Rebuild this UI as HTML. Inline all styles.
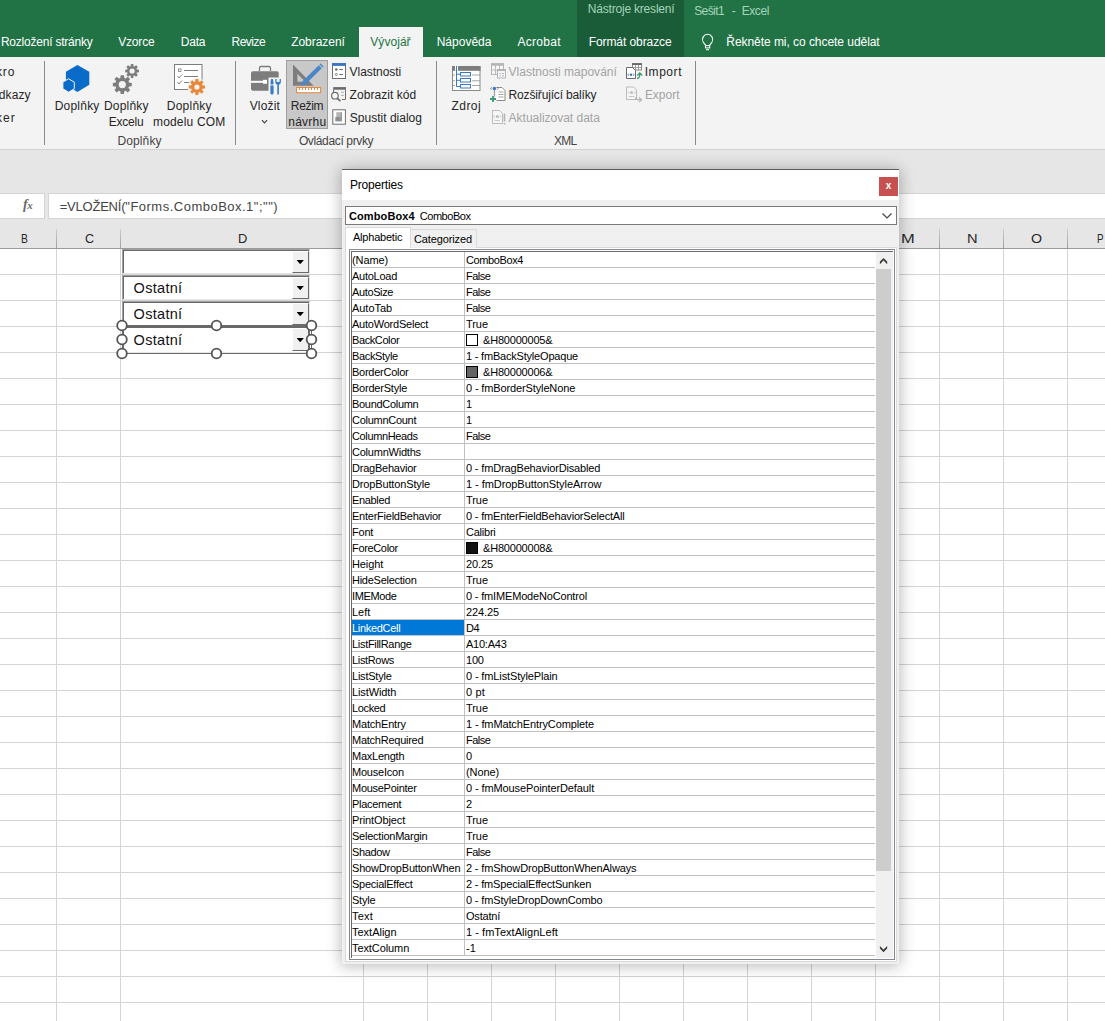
<!DOCTYPE html>
<html lang="cs"><head><meta charset="utf-8"><title>Excel</title>
<style>
*{box-sizing:border-box;margin:0;padding:0}
html,body{width:1105px;height:1021px;overflow:hidden;background:#fff}
body{font-family:"Liberation Sans",sans-serif;font-size:12px;color:#262626;position:relative}
.abs,.t{position:absolute;white-space:nowrap}
.t{line-height:14px}
#green{left:0;top:0;width:1105px;height:57px;background:#217346}
#ctx{left:577px;top:0;width:107px;height:57px;background:#1a5c38}
.L{position:absolute;line-height:16px;white-space:nowrap}
#devtab{left:359px;top:27px;width:64px;height:30px;background:#f3f3f3}
#ribbon{left:0;top:57px;width:1105px;height:93px;background:#f3f3f3;border-bottom:1px solid #d2d2d2}
#gap{left:0;top:150px;width:1105px;height:98px;background:#e6e6e6}
.sep{position:absolute;top:61px;width:1px;height:84px;background:#8a8a8a}
.rl{position:absolute;font-size:12px;line-height:16px;white-space:nowrap;color:#262626}
.rl.c{text-align:center;transform:translateX(-50%)}
.gl{position:absolute;top:133px;font-size:12px;line-height:16px;color:#444;white-space:nowrap;transform:translateX(-50%)}
.dis{color:#a6a6a6}
#fxbox{left:0;top:193px;width:45px;height:26px;background:#fff;border:1px solid #d4d4d4;border-left:0}
#fbar{left:48px;top:193px;width:1057px;height:26px;background:#fff;border:1px solid #d4d4d4;border-right:0}
#hdr{left:0;top:227px;width:1105px;height:22px;background:#e6e6e6;border-bottom:1px solid #9b9b9b}
.hs{position:absolute;top:229px;width:1px;height:19px;background:linear-gradient(#cfcfcf,#9e9e9e)}
.hl{position:absolute;top:231px;font-size:13px;line-height:16px;color:#262626;transform:translateX(-50%)}
#grid{left:0;top:249px;width:1105px;height:772px;background:#fff}
.cb{position:absolute;left:122px;width:188px;background:#fff;border:1px solid #a0a0a0;border-right-color:#e6e6e6;border-bottom-color:#e6e6e6;box-shadow:inset 1px 1px 0 #696969}
.cb .tx{position:absolute;left:10px;top:2px;font-size:15px;line-height:18px;color:#111;font-family:"Liberation Sans",sans-serif}
.cb .bt{position:absolute;right:0;top:1px;bottom:0;width:17px;background:#f0f0f0;border-left:1px solid #fff;border-top:1px solid #fff;border-right:1px solid #696969;border-bottom:1px solid #696969}
.cb .b4:after{top:9px!important}
.cb .bt:after{content:"";position:absolute;left:3.500px;top:8px;width:7.400px;height:4.200px;background:#000;clip-path:polygon(0 0,100% 0,50% 100%)}
.h{position:absolute;width:11px;height:11px;border-radius:50%;background:#fff;border:1.500px solid #5a5a5a}
/* dialog */
#dlg{left:342px;top:169px;width:557px;height:795px;background:#f0f0f0;box-shadow:0 1px 14px 1px rgba(0,0,0,.28);font-size:11px}
#dtop{left:0;top:0;width:557px;height:1px;background:#5a5a5a}
#dtitle{left:0;top:1px;width:557px;height:30px;background:#fff}
#dclose{left:537px;top:8px;width:19px;height:19px;background:#c75050;color:#fff;font-weight:bold;font-size:10px;line-height:17px;text-align:center}
#dcombo{left:3px;top:37px;width:552px;height:19px;background:#fff;border:1px solid #7a7a7a}
#tabpage{left:3px;top:78px;width:552px;height:715px;background:#fff;border:1px solid #dadada}
#tab1{left:3px;top:58px;width:66px;height:21px;background:#fff;border:1px solid #dadada;border-bottom:0}
#tab2{left:68px;top:60px;width:67px;height:19px;background:#f0f0f0;border:1px solid #dadada;border-bottom:0}
#list{left:7px;top:80px;width:546px;height:711px;background:#fff;border:1px solid #828790}
#list2{left:1px;top:1px;width:542px;height:707px;border-top:1px solid #696969;border-left:1px solid #696969;overflow:hidden}
.r{position:relative;height:16px;width:523px;border-bottom:1px solid #c0c0c0;font-size:11px;line-height:15px;color:#000;white-space:nowrap}
.r .n{position:absolute;left:0;top:0;width:112px;height:15px;padding-left:0;overflow:hidden;line-height:17px}
.r:after{content:"";position:absolute;left:112px;top:0;width:1px;height:15px;background:#c0c0c0}
.r .v{position:absolute;left:114px;top:0;height:15px;line-height:17px}
.r.sel .n{background:#0078d7;color:#fff}
.sw{position:absolute;left:0;top:2px;width:12px;height:12px;border:1px solid #000}
.cv{position:absolute;left:17px;top:0}
.tight{letter-spacing:-.3px}
#sb{left:524px;top:0;width:17px;height:706px;background:#f0f0f0}
#thumb{left:0;top:17px;width:15px;height:602px;background:#cdcdcd}
</style></head><body>
<div class="abs" id="green"></div>
<div class="abs" id="ctx"></div>
<div class="abs" id="devtab"></div>
<svg class="abs" style="left:699px;top:31px" width="16" height="20" viewBox="0 0 16 20"><path d="M6.600 14.400L4.180 10.950A5.100 5.100 0 1 1 13.020 10.950L10.600 14.400" fill="none" stroke="#fff" stroke-width="1.100"/><rect x="6.500" y="14.600" width="4.200" height="2.300" fill="none" stroke="#fff" stroke-width="1"/><path d="M7 18.700h3.200" stroke="#fff" stroke-width="1"/></svg>

<div class="abs" id="ribbon"></div>
<div class="abs" id="gap"></div>

<div class="sep" style="left:44px"></div><div class="sep" style="left:235px"></div><div class="sep" style="left:436px"></div><div class="sep" style="left:695px"></div>
<div class="abs" style="left:286px;top:60px;width:42px;height:69px;background:#c8c8c8;border:1px solid #9e9e9e"></div>
<svg class="abs" style="left:0;top:0" width="1105" height="150" viewBox="0 0 1105 150">
<!-- hex -->
<path d="M77.400 65L89.300 71.800V84.800L77.400 92L65.900 84.800V71.800Z" fill="#0a6cc8"/>
<path d="M68.600 78.800L74.300 82.100V88.800L68.600 92.200L62.900 88.800V82.100Z" fill="#0a6cc8" stroke="#f3f3f3" stroke-width="1"/>
<!-- gears -->
<path d="M129.01 82.59L131.76 82.95L131.76 86.25L129.01 86.61L128.46 87.92L130.15 90.12L127.82 92.45L125.62 90.76L124.31 91.31L123.95 94.06L120.65 94.06L120.29 91.31L118.98 90.76L116.78 92.45L114.45 90.12L116.14 87.92L115.59 86.61L112.84 86.25L112.84 82.95L115.59 82.59L116.14 81.28L114.45 79.08L116.78 76.75L118.98 78.44L120.29 77.89L120.65 75.14L123.95 75.14L124.31 77.89L125.62 78.44L127.82 76.75L130.15 79.08L128.46 81.28ZM125.90 84.60A3.6 3.6 0 1 0 118.70 84.60A3.6 3.6 0 1 0 125.90 84.60Z" fill="#7d7d7d" fill-rule="evenodd"/>
<path d="M136.89 69.57L139.00 69.80L139.00 72.20L136.89 72.43L136.50 73.37L137.83 75.03L136.13 76.73L134.47 75.40L133.53 75.79L133.30 77.90L130.90 77.90L130.67 75.79L129.73 75.40L128.07 76.73L126.37 75.03L127.70 73.37L127.31 72.43L125.20 72.20L125.20 69.80L127.31 69.57L127.70 68.63L126.37 66.97L128.07 65.27L129.73 66.60L130.67 66.21L130.90 64.10L133.30 64.10L133.53 66.21L134.47 66.60L136.13 65.27L137.83 66.97L136.50 68.63ZM134.70 71.00A2.6 2.6 0 1 0 129.50 71.00A2.6 2.6 0 1 0 134.70 71.00Z" fill="#7d7d7d" fill-rule="evenodd"/>
<!-- COM -->
<rect x="174.500" y="64.500" width="27.500" height="25" fill="#fff" stroke="#7d7d7d" stroke-width="1"/>
<rect x="178.500" y="69" width="2.500" height="2.500" fill="none" stroke="#7d7d7d" stroke-width=".8"/>
<path d="M184 70.500h14M184 76.500h14M184 82.500h6" stroke="#7d7d7d" stroke-width="1"/>
<path d="M177.500 76l1.500 2 3-3.500M177.500 82l1.500 2 3-3.500" fill="none" stroke="#7d7d7d" stroke-width=".9"/>
<circle cx="196.900" cy="87" r="9.300" fill="#f3f3f3"/>
<path d="M202.46 85.34L204.98 85.59L204.98 88.41L202.46 88.66L202.00 89.75L203.61 91.72L201.62 93.71L199.65 92.10L198.56 92.56L198.31 95.08L195.49 95.08L195.24 92.56L194.15 92.10L192.18 93.71L190.19 91.72L191.80 89.75L191.34 88.66L188.82 88.41L188.82 85.59L191.34 85.34L191.80 84.25L190.19 82.28L192.18 80.29L194.15 81.90L195.24 81.44L195.49 78.92L198.31 78.92L198.56 81.44L199.65 81.90L201.62 80.29L203.61 82.28L202.00 84.25ZM199.50 87.00A2.6 2.6 0 1 0 194.30 87.00A2.6 2.6 0 1 0 199.50 87.00Z" fill="#e8883a" fill-rule="evenodd"/>
<!-- briefcase -->
<path d="M259.500 71v-3.200a1.300 1.300 0 0 1 1.300-1.300h8.400a1.300 1.300 0 0 1 1.300 1.300V71" fill="none" stroke="#7d7d7d" stroke-width="1.300"/>
<rect x="251" y="71.300" width="27.700" height="19.500" rx="2" fill="#7d7d7d"/>
<rect x="251" y="80.800" width="16" height="2" fill="#fff"/>
<rect x="263" y="79.800" width="4" height="4" fill="#fff"/>
<rect x="268.500" y="77.500" width="14" height="18.500" fill="#f3f3f3"/>
<path d="M271.200 79h1.600l.6 2.500v3h-2.800v-3zM270.400 85.500h3.200v7.500a1.600 1.600 0 0 1-3.200 0z" fill="#3a7cc4"/>
<path d="M275.300 79v3a2.900 2.900 0 0 0 2 2.700V94.600h1.600V84.700a2.900 2.900 0 0 0 2-2.700v-3h-1.300v3h-3v-3z" fill="#3a7cc4"/>
<path d="M261.900 120.200l2.600 2.600 2.600-2.600" fill="none" stroke="#444" stroke-width="1.200"/>
<!-- design mode -->
<path d="M293 64.500V85.700H313.600ZM297.400 73.700L305.300 81.800H297.400Z" fill="#7d7d7d" fill-rule="evenodd"/>
<path d="M301 85.700l1.300-4.300 16.500-16.200 3 3L305.300 84.400z" fill="#4a86c8"/>
<path d="M319.500 64.600l1.100-1.100 3 3-1.100 1.100z" fill="#4a86c8"/>
<rect x="296.600" y="87.500" width="24" height="5.200" fill="#fff" stroke="#e8883a" stroke-width="1"/>
<path d="M299.500 88v2M302.500 88v2M305.500 88v2M308.500 88v2M311.500 88v2M314.500 88v2M317.500 88v2" stroke="#e8883a" stroke-width="1"/>
<!-- Vlastnosti -->
<rect x="332.500" y="63.500" width="13" height="15" fill="#fff" stroke="#6e6e6e"/>
<rect x="332" y="63" width="14" height="2.900" fill="#3b78c3"/>
<circle cx="336.300" cy="69.500" r="1.300" fill="#6a6a6a"/><circle cx="336.300" cy="74.500" r="1" fill="#fff" stroke="#6a6a6a" stroke-width=".8"/>
<path d="M339.300 69.500h3.600M339.300 74.500h3.600" stroke="#6a6a6a" stroke-width="1"/>
<!-- Zobrazit kod -->
<path d="M333.500 89.500v3M345.500 89.500v10h-3.500" fill="none" stroke="#6e6e6e"/>
<rect x="333.200" y="87.100" width="12.800" height="2.600" fill="#6a6a6a"/>
<path d="M341 92.300h2.800M341 95.400h2.800" stroke="#a6a6a6" stroke-width=".9"/>
<circle cx="334.900" cy="95.700" r="3.300" fill="#f6f6f6" stroke="#6e6e6e" stroke-width="1.200"/>
<path d="M337.400 98.300l3 2.900" stroke="#6e6e6e" stroke-width="1.800"/>
<!-- Spustit dialog -->
<rect x="332.800" y="109.800" width="12.600" height="14.400" fill="#fff" stroke="#6e6e6e"/>
<rect x="336.300" y="112.200" width="4.400" height="4.800" fill="#b4b4b4"/><rect x="335.300" y="117" width="5.400" height="4.400" fill="#8e8e8e"/>
<rect x="340.700" y="112.200" width="1" height="9.200" fill="#6a6a6a"/>
<!-- Zdroj -->
<rect x="452.500" y="66.500" width="27.500" height="24" fill="#fff" stroke="#8a8a8a"/>
<rect x="452" y="66" width="28.500" height="4.800" fill="#7d7d7d"/>
<rect x="455" y="66" width="3" height="4.800" fill="#fff"/>
<path d="M472 75h8M472 80.800h8M472 85.500h8M453 75h2M453 80.800h2M453 85.500h2" stroke="#9a9a9a" stroke-width=".9"/>
<path d="M456.500 66v20.500h4M456.500 74.200h4M456.500 80.300h4" fill="none" stroke="#3b78c3" stroke-width="1"/>
<rect x="460.500" y="72.500" width="10" height="3.500" fill="#fff" stroke="#3b78c3"/><rect x="460.500" y="78.500" width="10" height="3.500" fill="#fff" stroke="#3b78c3"/><rect x="460.500" y="84.500" width="10" height="3.500" fill="#fff" stroke="#3b78c3"/>
<!-- Vlastnosti mapovani (disabled) -->
<rect x="491.500" y="64" width="12" height="10.500" fill="#f6f6f6" stroke="#b4b4b4"/><rect x="491" y="63.200" width="13" height="2.500" fill="#b4b4b4"/>
<path d="M495.500 65v9.500M499.500 65v4M491.500 70h6" stroke="#b4b4b4" stroke-width=".9"/>
<rect x="497.500" y="69.500" width="8" height="8.500" fill="#f6f6f6" stroke="#b4b4b4"/><rect x="497" y="69" width="9" height="2" fill="#b4b4b4"/>
<path d="M499.500 73.500h1.500M502 73.500h2M499.500 75.800h1.500M502 75.800h2" stroke="#b4b4b4" stroke-width="1"/>
<!-- Rozsirujici -->
<path d="M496.500 87.500h5.500l3 3v10h-8.500" fill="#fff" stroke="#7d7d7d" stroke-width=".9"/>
<path d="M498.500 92h5M498.500 94.500h5M498.500 97h5" stroke="#8a8a8a" stroke-width=".8"/>
<path d="M494.400 89.500v7" stroke="#7d7d7d" stroke-width=".8"/>
<circle cx="494.400" cy="88.500" r="1.700" fill="#3b78c3"/>
<path d="M491.800 87.300l-1.200 1.200 1.200 1.200M497 87.300l1.200 1.200-1.200 1.200" fill="none" stroke="#555" stroke-width=".7"/>
<path d="M490 99h6M493 96v6" stroke="#3a9a78" stroke-width="1.800"/>
<!-- Aktualizovat (disabled) -->
<path d="M492.500 110.500h7l3 3v10h-10z" fill="#f6f6f6" stroke="#b4b4b4" stroke-width=".9"/>
<circle cx="497.300" cy="116.500" r="1.500" fill="#bdbdbd"/>
<path d="M494.500 115.300l-1 1.200 1 1.200M500 115.300l1 1.200-1 1.200M494.500 120.500h5.500" fill="none" stroke="#b4b4b4" stroke-width=".7"/>
<path d="M504.500 113.500v8M504.500 123v1.600" stroke="#b4b4b4" stroke-width="1.600"/>
<!-- Import -->
<rect x="632.500" y="63.700" width="9" height="6.300" fill="#fff" stroke="#7d7d7d" stroke-width=".9"/><rect x="632" y="63.200" width="10" height="1.800" fill="#6a6a6a"/>
<path d="M635.500 65v5M638.500 65v5M632.500 67.500h9" stroke="#7d7d7d" stroke-width=".7"/>
<path d="M626.500 67.500h6l3 3v8h-9z" fill="#fff" stroke="#6a6a6a" stroke-width="1"/>
<circle cx="631" cy="74.800" r="1.300" fill="#3b78c3"/>
<path d="M628.800 73.600l-1 1.200 1 1.200M633.200 73.600l1 1.200-1 1.200" fill="none" stroke="#555" stroke-width=".7"/>
<path d="M637 78.500c2.500 0 2.800-1.500 2.800-4.500M637.300 75.500l2.500-2.500 2.500 2.500" fill="none" stroke="#3a9a78" stroke-width="1.300"/>
<!-- Export (disabled) -->
<path d="M626.500 87h7l3 3v9.500h-10z" fill="#f6f6f6" stroke="#b4b4b4" stroke-width=".9"/>
<circle cx="631.500" cy="92.600" r="1.500" fill="#bdbdbd"/>
<path d="M629 91.400l-1 1.200 1 1.200M634 91.400l1 1.200-1 1.200M629 96.500h5.500" fill="none" stroke="#b4b4b4" stroke-width=".7"/>
<path d="M635.500 97.500c0 2 1 2.300 5.500 2.300M639 97.500l2.500 2.300-2.500 2.300" fill="none" stroke="#b4b4b4" stroke-width="1.200"/>
</svg>


<div class="abs" id="fxbox"></div>
<div class="abs" id="fbar"></div>
<div class="t" style="left:23px;top:196px;font-family:'Liberation Serif',serif;font-style:italic;font-weight:bold;font-size:14px;line-height:18px;color:#6a6a6a">f<span style="font-size:11px;margin-left:-.500px">x</span></div>

<div class="abs" id="hdr"></div>
<div class="abs" id="grid">
<svg width="1105" height="772" style="position:absolute;left:0;top:0"><defs>
<pattern id="hp" width="1105" height="26" patternUnits="userSpaceOnUse"><rect x="0" y="25" width="1105" height="1" fill="#d4d4d4"/></pattern></defs>
<rect width="1105" height="772" fill="url(#hp)"/>
<g fill="#d4d4d4"><rect x="56" width="1" height="772"/><rect x="120" width="1" height="772"/><rect x="363" width="1" height="772"/><rect x="427" width="1" height="772"/><rect x="491" width="1" height="772"/><rect x="555" width="1" height="772"/><rect x="619" width="1" height="772"/><rect x="683" width="1" height="772"/><rect x="747" width="1" height="772"/><rect x="811" width="1" height="772"/><rect x="875" width="1" height="772"/><rect x="939" width="1" height="772"/><rect x="1003" width="1" height="772"/><rect x="1067" width="1" height="772"/></g></svg>
</div>
<div class="hs" style="left:56px"></div><div class="hs" style="left:120px"></div><div class="hs" style="left:363px"></div><div class="hs" style="left:875px"></div><div class="hs" style="left:939px"></div><div class="hs" style="left:1003px"></div><div class="hs" style="left:1067px"></div>

<div class="cb" style="top:249px;height:25px"><div class="bt"></div></div>
<div class="cb" style="top:275px;height:25px"><div class="bt"></div></div>
<div class="cb" style="top:301px;height:25px"><div class="bt"></div></div>
<div class="cb" style="top:326px;height:27px;border-top-color:#696969;border-right-color:#6a6a6a"><div class="bt b4" style="bottom:1px"></div></div>
<div class="abs" style="left:122px;top:325px;width:190px;height:29px;border:1px solid #6a6a6a"></div>
<svg class="abs" style="left:110px;top:315px" width="212" height="50" viewBox="110 315 212 50"><g fill="#fff" stroke="#555" stroke-width="1.800"><circle cx="122" cy="325.500" r="4.800"/><circle cx="216.500" cy="325.500" r="4.800"/><circle cx="311.500" cy="325.500" r="4.800"/><circle cx="122" cy="339.500" r="4.800"/><circle cx="311.500" cy="339.500" r="4.800"/><circle cx="122" cy="353.500" r="4.800"/><circle cx="216.500" cy="353.500" r="4.800"/><circle cx="311.500" cy="353.500" r="4.800"/></g></svg>
<div class="L" style="left:0.9px;top:34.4px;font-size:12px;color:#fff;letter-spacing:-0.22px">Rozložení stránky</div>
<div class="L" style="left:118.2px;top:34.4px;font-size:12px;color:#fff;letter-spacing:-0.17px">Vzorce</div>
<div class="L" style="left:180.7px;top:34.4px;font-size:12px;color:#fff;letter-spacing:-0.18px">Data</div>
<div class="L" style="left:231.5px;top:34.4px;font-size:12px;color:#fff;letter-spacing:-0.50px">Revize</div>
<div class="L" style="left:291.2px;top:34.4px;font-size:12px;color:#fff;letter-spacing:-0.04px">Zobrazení</div>
<div class="L" style="left:370.3px;top:34.4px;font-size:12px;color:#217346;letter-spacing:0.05px">Vývojář</div>
<div class="L" style="left:436.7px;top:34.4px;font-size:12px;color:#fff;letter-spacing:-0.00px">Nápověda</div>
<div class="L" style="left:517.5px;top:34.4px;font-size:12px;color:#fff;letter-spacing:0.27px">Acrobat</div>
<div class="L" style="left:588.7px;top:34.4px;font-size:12px;color:#fff;letter-spacing:-0.08px">Formát obrazce</div>
<div class="L" style="left:726.3px;top:34.4px;font-size:12px;color:#fff;letter-spacing:-0.05px">Řekněte mi, co chcete udělat</div>
<div class="L" style="left:587.8px;top:1.0px;font-size:12px;color:#a5d3b8;letter-spacing:-0.20px">Nástroje kreslení</div>
<div class="L" style="left:694.2px;top:2.8px;font-size:12px;color:#a5d3b8;letter-spacing:-0.59px">Sešit1</div>
<div class="L" style="left:731.8px;top:2.8px;font-size:12px;color:#a5d3b8">-</div>
<div class="L" style="left:741.7px;top:2.8px;font-size:12px;color:#a5d3b8;letter-spacing:-0.41px">Excel</div>
<div class="L" style="left:-4.0px;top:64.3px;font-size:12px;color:#262626;letter-spacing:0.87px">kro</div>
<div class="L" style="left:-1.3px;top:86.8px;font-size:12px;color:#262626;letter-spacing:0.14px">dkazy</div>
<div class="L" style="left:-4.0px;top:109.8px;font-size:12px;color:#262626;letter-spacing:1.02px">ker</div>
<div class="L" style="left:54.7px;top:98.4px;font-size:12px;color:#262626;letter-spacing:0.22px">Doplňky</div>
<div class="L" style="left:103.9px;top:98.4px;font-size:12px;color:#262626;letter-spacing:0.22px">Doplňky</div>
<div class="L" style="left:108.8px;top:114.4px;font-size:12px;color:#262626;letter-spacing:-0.24px">Excelu</div>
<div class="L" style="left:166.8px;top:98.4px;font-size:12px;color:#262626;letter-spacing:0.24px">Doplňky</div>
<div class="L" style="left:153.0px;top:114.4px;font-size:12px;color:#262626;letter-spacing:0.17px">modelu COM</div>
<div class="L" style="left:117.5px;top:133.4px;font-size:12px;color:#444;letter-spacing:0.11px">Doplňky</div>
<div class="L" style="left:249.7px;top:98.4px;font-size:12px;color:#262626;letter-spacing:0.17px">Vložit</div>
<div class="L" style="left:290.8px;top:98.4px;font-size:12px;color:#262626;letter-spacing:-0.30px">Režim</div>
<div class="L" style="left:288.3px;top:114.2px;font-size:12px;color:#262626;letter-spacing:0.22px">návrhu</div>
<div class="L" style="left:349.6px;top:64.4px;font-size:12px;color:#262626;letter-spacing:-0.05px">Vlastnosti</div>
<div class="L" style="left:349.6px;top:86.8px;font-size:12px;color:#262626;letter-spacing:0.04px">Zobrazit kód</div>
<div class="L" style="left:349.8px;top:109.8px;font-size:12px;color:#262626;letter-spacing:0.01px">Spustit dialog</div>
<div class="L" style="left:298.9px;top:133.4px;font-size:12px;color:#444;letter-spacing:-0.36px">Ovládací prvky</div>
<div class="L" style="left:451.6px;top:98.4px;font-size:12px;color:#262626;letter-spacing:0.42px">Zdroj</div>
<div class="L" style="left:508.6px;top:64.4px;font-size:12px;color:#a3a3a3;letter-spacing:0.01px">Vlastnosti mapování</div>
<div class="L" style="left:508.6px;top:86.8px;font-size:12px;color:#262626;letter-spacing:-0.16px">Rozšiřující balíky</div>
<div class="L" style="left:508.6px;top:109.8px;font-size:12px;color:#a3a3a3;letter-spacing:-0.01px">Aktualizovat data</div>
<div class="L" style="left:644.7px;top:64.4px;font-size:12px;color:#262626;letter-spacing:0.56px">Import</div>
<div class="L" style="left:644.9px;top:86.8px;font-size:12px;color:#a3a3a3;letter-spacing:-0.02px">Export</div>
<div class="L" style="left:554.1px;top:133.4px;font-size:12px;color:#444;letter-spacing:-0.80px">XML</div>
<div class="L" style="left:59.7px;top:198.5px;font-size:13px;color:#444;letter-spacing:-0.22px">=VLOŽENÍ(</div>
<div class="L" style="left:125.3px;top:198.5px;font-size:13px;color:#444;letter-spacing:0.49px">"Forms.ComboBox.1";"")</div>
<div class="L" style="left:133.6px;top:279.8px;font-size:14.5px;color:#111;letter-spacing:0.29px">Ostatní</div>
<div class="L" style="left:133.6px;top:305.9px;font-size:14.5px;color:#111;letter-spacing:0.29px">Ostatní</div>
<div class="L" style="left:133.6px;top:332.1px;font-size:14.5px;color:#111;letter-spacing:0.29px">Ostatní</div>
<div class="L" style="left:21.0px;top:230.6px;font-size:12px;color:#262626;transform:scaleX(0.857);transform-origin:0 0">B</div>
<div class="L" style="left:84.6px;top:230.6px;font-size:12px;color:#262626;transform:scaleX(1.047);transform-origin:0 0">C</div>
<div class="L" style="left:237.9px;top:230.6px;font-size:12px;color:#262626;transform:scaleX(1.073);transform-origin:0 0">D</div>
<div class="L" style="left:901.2px;top:230.6px;font-size:12px;color:#262626;transform:scaleX(1.373);transform-origin:0 0">M</div>
<div class="L" style="left:966.9px;top:230.6px;font-size:12px;color:#262626;transform:scaleX(1.221);transform-origin:0 0">N</div>
<div class="L" style="left:1030.7px;top:230.6px;font-size:12px;color:#262626;transform:scaleX(1.183);transform-origin:0 0">O</div>
<div class="L" style="left:1096.5px;top:230.6px;font-size:12px;color:#262626;transform:scaleX(0.814);transform-origin:0 0">P</div>
<div class="abs" id="dlg">
 <div class="abs" id="dtop"></div>
 <div class="abs" id="dtitle"></div>
 <div class="t" style="left:8px;top:9px;font-size:12px;line-height:14px;color:#000;letter-spacing:-.2px">Properties</div>
 <div class="abs" id="dclose">x</div>
 <div class="abs" id="dcombo"></div>
 <div class="t" style="left:7px;top:40px;font-size:11px;line-height:14px;color:#000"><b style="letter-spacing:.1px">ComboBox4</b> <span style="margin-left:2px;letter-spacing:-.45px">ComboBox</span></div>
 <svg class="abs" style="left:539px;top:43px" width="12" height="8" viewBox="0 0 12 8"><path d="M1.500 1.500L6 6l4.500-4.500" fill="none" stroke="#444" stroke-width="1.200"/></svg>
 <div class="abs" id="tabpage"></div>
 <div class="abs" id="tab2"></div>
 <div class="abs" id="tab1"></div>
 <div class="t" style="left:11px;top:61px;letter-spacing:-.22px;color:#000">Alphabetic</div>
 <div class="t" style="left:72px;top:63px;letter-spacing:-.12px;color:#000">Categorized</div>
 <div class="abs" id="list"><div class="abs" id="list2">
<div class="r"><span class="n" style="letter-spacing:-0.10px">(Name)</span><span class="v" style="letter-spacing:-0.39px">ComboBox4</span></div>
<div class="r"><span class="n" style="letter-spacing:-0.26px">AutoLoad</span><span class="v" style="letter-spacing:-0.50px">False</span></div>
<div class="r"><span class="n" style="letter-spacing:-0.37px">AutoSize</span><span class="v" style="letter-spacing:-0.50px">False</span></div>
<div class="r"><span class="n" style="letter-spacing:-0.04px">AutoTab</span><span class="v" style="letter-spacing:-0.50px">False</span></div>
<div class="r"><span class="n" style="letter-spacing:-0.22px">AutoWordSelect</span><span class="v" style="letter-spacing:-0.05px">True</span></div>
<div class="r"><span class="n" style="letter-spacing:-0.40px">BackColor</span><span class="v"><i class="sw" style="background:#fff"></i><span class="cv" style="letter-spacing:-0.20px">&H80000005&</span></span></div>
<div class="r"><span class="n" style="letter-spacing:-0.35px">BackStyle</span><span class="v" style="letter-spacing:-0.20px">1 - fmBackStyleOpaque</span></div>
<div class="r"><span class="n" style="letter-spacing:-0.26px">BorderColor</span><span class="v"><i class="sw" style="background:#646464"></i><span class="cv" style="letter-spacing:-0.20px">&H80000006&</span></span></div>
<div class="r"><span class="n" style="letter-spacing:-0.22px">BorderStyle</span><span class="v" style="letter-spacing:-0.13px">0 - fmBorderStyleNone</span></div>
<div class="r"><span class="n" style="letter-spacing:-0.30px">BoundColumn</span><span class="v">1</span></div>
<div class="r"><span class="n" style="letter-spacing:-0.28px">ColumnCount</span><span class="v">1</span></div>
<div class="r"><span class="n" style="letter-spacing:-0.37px">ColumnHeads</span><span class="v" style="letter-spacing:-0.50px">False</span></div>
<div class="r"><span class="n" style="letter-spacing:-0.22px">ColumnWidths</span><span class="v"></span></div>
<div class="r"><span class="n" style="letter-spacing:-0.23px">DragBehavior</span><span class="v" style="letter-spacing:-0.15px">0 - fmDragBehaviorDisabled</span></div>
<div class="r"><span class="n" style="letter-spacing:-0.14px">DropButtonStyle</span><span class="v" style="letter-spacing:-0.06px">1 - fmDropButtonStyleArrow</span></div>
<div class="r"><span class="n" style="letter-spacing:-0.34px">Enabled</span><span class="v" style="letter-spacing:-0.05px">True</span></div>
<div class="r"><span class="n" style="letter-spacing:-0.24px">EnterFieldBehavior</span><span class="v" style="letter-spacing:-0.18px">0 - fmEnterFieldBehaviorSelectAll</span></div>
<div class="r"><span class="n" style="letter-spacing:-0.20px">Font</span><span class="v" style="letter-spacing:-0.23px">Calibri</span></div>
<div class="r"><span class="n" style="letter-spacing:-0.34px">ForeColor</span><span class="v"><i class="sw" style="background:#111"></i><span class="cv" style="letter-spacing:-0.20px">&H80000008&</span></span></div>
<div class="r"><span class="n" style="letter-spacing:-0.10px">Height</span><span class="v" style="letter-spacing:-0.11px">20.25</span></div>
<div class="r"><span class="n" style="letter-spacing:-0.26px">HideSelection</span><span class="v" style="letter-spacing:-0.05px">True</span></div>
<div class="r"><span class="n" style="letter-spacing:-0.38px">IMEMode</span><span class="v" style="letter-spacing:-0.17px">0 - fmIMEModeNoControl</span></div>
<div class="r"><span class="n" style="letter-spacing:-0.05px">Left</span><span class="v" style="letter-spacing:-0.13px">224.25</span></div>
<div class="r sel"><span class="n" style="letter-spacing:-0.31px">LinkedCell</span><span class="v" style="letter-spacing:-0.39px">D4</span></div>
<div class="r"><span class="n" style="letter-spacing:-0.31px">ListFillRange</span><span class="v" style="letter-spacing:-0.24px">A10:A43</span></div>
<div class="r"><span class="n" style="letter-spacing:-0.34px">ListRows</span><span class="v" style="letter-spacing:-0.20px">100</span></div>
<div class="r"><span class="n" style="letter-spacing:-0.22px">ListStyle</span><span class="v" style="letter-spacing:-0.13px">0 - fmListStylePlain</span></div>
<div class="r"><span class="n" style="letter-spacing:-0.11px">ListWidth</span><span class="v" style="letter-spacing:0.14px">0 pt</span></div>
<div class="r"><span class="n" style="letter-spacing:-0.35px">Locked</span><span class="v" style="letter-spacing:-0.05px">True</span></div>
<div class="r"><span class="n" style="letter-spacing:-0.19px">MatchEntry</span><span class="v" style="letter-spacing:-0.12px">1 - fmMatchEntryComplete</span></div>
<div class="r"><span class="n" style="letter-spacing:-0.25px">MatchRequired</span><span class="v" style="letter-spacing:-0.50px">False</span></div>
<div class="r"><span class="n" style="letter-spacing:-0.24px">MaxLength</span><span class="v">0</span></div>
<div class="r"><span class="n" style="letter-spacing:-0.22px">MouseIcon</span><span class="v" style="letter-spacing:-0.07px">(None)</span></div>
<div class="r"><span class="n" style="letter-spacing:-0.28px">MousePointer</span><span class="v" style="letter-spacing:-0.11px">0 - fmMousePointerDefault</span></div>
<div class="r"><span class="n" style="letter-spacing:-0.29px">Placement</span><span class="v">2</span></div>
<div class="r"><span class="n" style="letter-spacing:-0.12px">PrintObject</span><span class="v" style="letter-spacing:-0.05px">True</span></div>
<div class="r"><span class="n" style="letter-spacing:-0.23px">SelectionMargin</span><span class="v" style="letter-spacing:-0.05px">True</span></div>
<div class="r"><span class="n" style="letter-spacing:-0.34px">Shadow</span><span class="v" style="letter-spacing:-0.50px">False</span></div>
<div class="r"><span class="n" style="letter-spacing:-0.20px">ShowDropButtonWhen</span><span class="v" style="letter-spacing:-0.15px">2 - fmShowDropButtonWhenAlways</span></div>
<div class="r"><span class="n" style="letter-spacing:-0.26px">SpecialEffect</span><span class="v" style="letter-spacing:-0.17px">2 - fmSpecialEffectSunken</span></div>
<div class="r"><span class="n" style="letter-spacing:-0.24px">Style</span><span class="v" style="letter-spacing:-0.15px">0 - fmStyleDropDownCombo</span></div>
<div class="r"><span class="n" style="letter-spacing:0.23px">Text</span><span class="v" style="letter-spacing:-0.21px">Ostatní</span></div>
<div class="r"><span class="n" style="letter-spacing:-0.01px">TextAlign</span><span class="v" style="letter-spacing:0.04px">1 - fmTextAlignLeft</span></div>
<div class="r"><span class="n" style="letter-spacing:-0.09px">TextColumn</span><span class="v" style="letter-spacing:0.04px">-1</span></div>
  <div class="abs" id="sb"><div class="abs" id="thumb"></div>
   <svg class="abs" style="left:3px;top:5px" width="10" height="9" viewBox="0 0 10 9"><path d="M4.500.9L8.200 4.600V7.300L4.500 3.600L.9 7.300V4.600Z" fill="#404040"/></svg>
   <svg class="abs" style="left:3px;top:693px" width="10" height="9" viewBox="0 0 10 9"><path d="M.9.9V3.600L4.500 7.200L8.200 3.600V.9L4.500 4.500Z" fill="#404040"/></svg>
  </div>
 </div></div>
</div>
</body></html>
